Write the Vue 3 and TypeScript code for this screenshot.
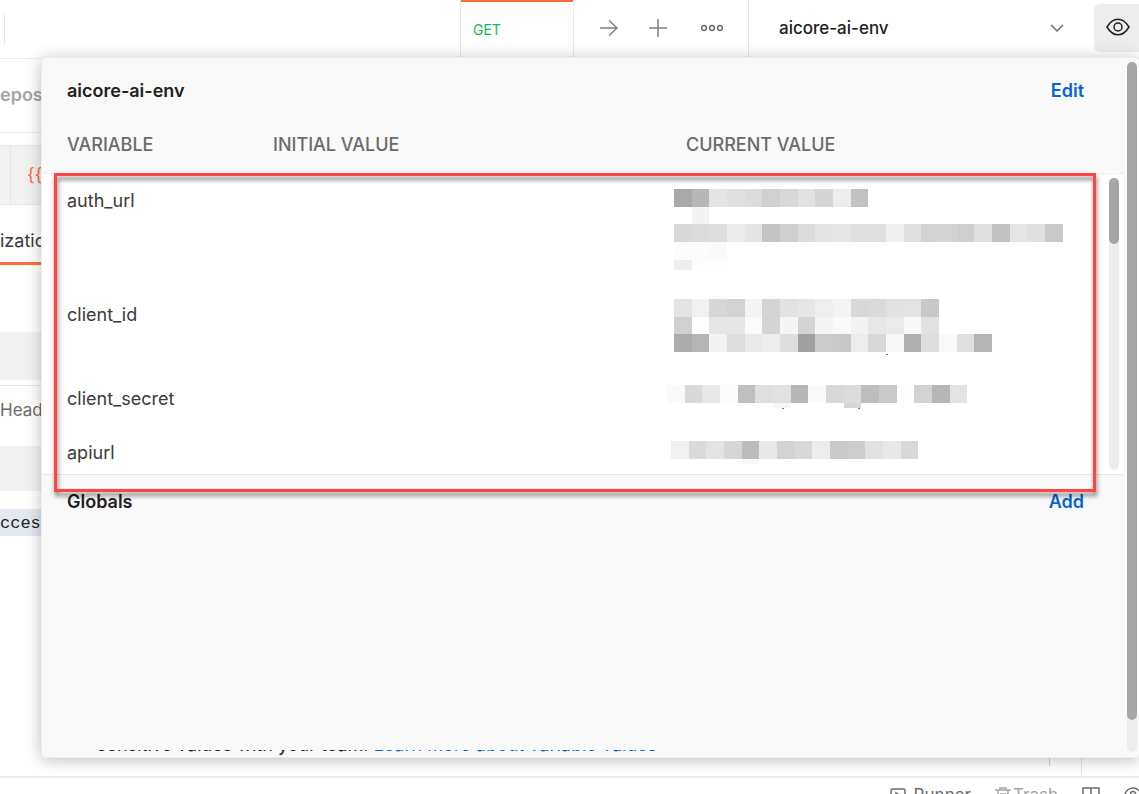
<script setup lang="ts">
import { ref } from 'vue'

interface Block {
  x: number
  y: number
  w: number
  h: number
  fill: string
}

interface Variable {
  name: string
  lines: number
  blocks: Block[]
}

const STEP = 53 / 3

/* Lays out one row of mosaic cells, each described by a grey level in hex. */
function strip(left: number, y: number, h: number, greys: string, skip = 0): Block[] {
  return greys.split(' ').map((grey, i) => {
    const start = Math.round((i + skip) * STEP)
    const end = Math.round((i + skip + 1) * STEP)
    return { x: left + start, y, w: end - start, h, fill: '#' + grey + grey + grey }
  })
}

const variables: Variable[] = [
  {
    name: 'auth_url',
    lines: 3,
    blocks: [
      ...strip(7, 15, 18, 'a9 b7 e4 e0 dc d0 d8 e2 d5 ed c2'),
      ...strip(7, 33, 17, 'f3', 1),
      ...strip(7, 50, 18, 'd8 dc de ea e4 c4 cf db e4 e6 e0 e0 ef e0 d2 d3 cf e0 c2 e5 e0 c9'),
      ...strip(7, 68, 18, 'fc fc fa'),
      ...strip(7, 86, 10, 'ee fd fd'),
    ],
  },
  {
    name: 'client_id',
    lines: 2,
    blocks: [
      ...strip(7, 11, 18, 'e4 f1 d6 d2 f4 d4 e2 e6 ee f4 d8 da e2 e3 c8'),
      ...strip(7, 29, 17, 'd0 fd e5 e6 fb d4 f5 d3 f5 fa f3 e7 ea f8 e1'),
      ...strip(7, 46, 18, 'ac b5 f3 dd e9 ed de a0 cb c8 ec d8 f8 af de f9 e0 b5'),
      { x: 219, y: 66, w: 2, h: 1, fill: '#777' },
    ],
  },
  {
    name: 'client_secret',
    lines: 1,
    blocks: [
      ...strip(0, 13, 18, 'fa d9 e7 fc bf df e1 b6 fa d8 dc bd ca fe d3 b6 e3'),
      ...strip(0, 31, 5, 'f6', 6),
      ...strip(0, 31, 5, 'd5', 10),
      { x: 115, y: 36, w: 2, h: 1, fill: '#777' },
      { x: 191, y: 36, w: 2, h: 1, fill: '#777' },
    ],
  },
  {
    name: 'apiurl',
    lines: 1,
    blocks: [
      ...strip(4, 15, 18, 'f0 da e3 d6 bc e8 d3 d8 ed ca cd e1 e8 d9'),
      ...strip(4, 33, 5, 'f8', 4),
    ],
  },
]

const environment = ref('aicore-ai-env')
</script>

<template>
  <div class="app">
    <header class="topbar">
      <div class="lead"><span class="divider"></span></div>
      <a class="tab" href="#">GET</a>
      <div class="actions">
        <button type="button" aria-label="Next tab">
          <svg width="20" height="20" viewBox="0 0 20 20"><path d="M1 10h17M10 2.5l8 7.5-8 7.5" /></svg>
        </button>
        <button type="button" aria-label="New tab">
          <svg width="20" height="20" viewBox="0 0 20 20"><path d="M10 1v18M1 10h18" /></svg>
        </button>
        <button type="button" aria-label="More options">
          <svg class="dots" width="22" height="8" viewBox="0 0 22 8">
            <circle cx="3" cy="4" r="2.4" /><circle cx="11" cy="4" r="2.4" /><circle cx="19" cy="4" r="2.4" />
          </svg>
        </button>
      </div>
      <div class="env">
        <select v-model="environment" aria-label="Environment">
          <option>aicore-ai-env</option>
        </select>
        <svg width="14" height="10" viewBox="0 0 14 10"><path d="M1 2l6 6 6-6" /></svg>
      </div>
      <button class="eye" type="button" aria-label="Environment quick look">
        <svg width="24" height="18" viewBox="0 0 24 18">
          <path d="M1 9C4 4 7.500 1.200 12 1.200S20 4 23 9c-3 5-6.500 7.800-11 7.800S4 14 1 9z" />
          <circle cx="12" cy="9" r="4" />
        </svg>
      </button>
    </header>

    <main class="request">
      <div class="crumb">epos</div>
      <div class="url"><span class="method"></span><span class="braces" v-text="'{{'"></span></div>
      <div class="subtab">ization</div>
      <div class="band"></div>
      <div class="headers">Head</div>
      <div class="band low"></div>
      <div class="code">cces</div>
      <div class="rail"><i></i></div>
    </main>

    <footer class="status">
      <a href="#" class="runner">
        <svg width="16" height="16" viewBox="0 0 16 16"><rect x="1" y="1" width="14" height="14" rx="1.500" /><path d="M6 5l5 3-5 3z" /></svg>
        Runner
      </a>
      <a href="#" class="trash">
        <svg width="16" height="18" viewBox="0 0 16 18"><path d="M0 3h16M5 3V1h6v2M3 3v14h10V3M6 6v9M8 6v9M10 6v9" /></svg>
        Trash
      </a>
      <button type="button" aria-label="Two pane view">
        <svg width="18" height="18" viewBox="0 0 18 18"><path d="M1 1h16v16H1zM9 1v16M1 11h16" /></svg>
      </button>
      <button type="button" aria-label="Help">
        <svg width="18" height="18" viewBox="0 0 18 18"><circle cx="9" cy="9" r="8" /><path d="M6.500 7a2.500 2.500 0 1 1 3.500 2.300c-.8.300-1 .8-1 1.700M9 12.500v1.500" /></svg>
      </button>
    </footer>

    <section class="panel">
      <div class="content">
        <div class="heading">
          <h2>{{ environment }}</h2>
          <a href="#">Edit</a>
        </div>
        <div class="values">
          <table>
            <thead>
              <tr><th>VARIABLE</th><th>INITIAL VALUE</th><th class="current">CURRENT VALUE</th></tr>
            </thead>
            <tbody>
              <tr v-for="v in variables" :key="v.name" :class="'lines-' + v.lines">
                <td class="name">{{ v.name }}</td>
                <td></td>
                <td>
                  <svg class="mosaic" width="400" height="54" shape-rendering="crispEdges" aria-hidden="true">
                    <rect v-for="(b, i) in v.blocks" :key="i" :x="b.x" :y="b.y" :width="b.w" :height="b.h" :fill="b.fill" />
                  </svg>
                </td>
              </tr>
            </tbody>
          </table>
          <div class="track inner"><div class="thumb"></div></div>
          <div class="highlight"></div>
        </div>
        <div class="heading globals">
          <h2>Globals</h2>
          <a href="#">Add</a>
        </div>
        <p class="note"><span>sensitive values with your team. <a href="#">Learn more about variable values</a></span></p>
      </div>
      <div class="gutter"><div class="track"><div class="thumb"></div></div></div>
    </section>
  </div>
</template>

<style>
body {
  margin: 0;
  background: #fff;
}
</style>

<style scoped>
.app {
  position: relative;
  display: flex;
  flex-direction: column;
  height: 100vh;
  overflow: hidden;
  box-sizing: border-box;
  font-family: Inter, "Liberation Sans", sans-serif;
  font-size: 18px;
  color: #212121;
}
.app * {
  box-sizing: border-box;
}
a {
  color: #0265d2;
  text-decoration: none;
}
button {
  display: flex;
  align-items: center;
  justify-content: center;
  padding: 0;
  border: 0;
  background: none;
}
svg {
  display: block;
  fill: none;
  stroke: #6b6b6b;
  stroke-width: 1.5;
}
.topbar {
  display: flex;
  flex: none;
  height: 59px;
  border-bottom: 1px solid #ededed;
}
.lead {
  flex: 1;
  padding: 13px 4px;
}
.divider {
  display: block;
  width: 1px;
  height: 31px;
  background: #e6e6e6;
}
.tab {
  width: 114px;
  padding-left: 12px;
  border: solid #e6e6e6;
  border-width: 0 1px;
  box-shadow: inset 0 2px #ff6c37;
  font-size: 14px;
  line-height: 60px;
  color: #0cbb52;
}
.actions {
  display: flex;
  align-items: center;
  gap: 27px;
  width: 175px;
  padding-left: 24px;
  padding-bottom: 3px;
  border-right: 1px solid #e6e6e6;
}
.actions button {
  width: 22px;
}
.actions svg {
  stroke: #808080;
}
.actions .dots {
  stroke: #6b6b6b;
}
.actions button:nth-child(2) {
  margin-right: 5px;
}
.env {
  display: flex;
  align-items: center;
  width: 345px;
  padding: 0 30px 3px;
}
.env select {
  flex: 1;
  height: 32px;
  padding: 0;
  border: 0;
  background: none;
  appearance: none;
  font: 500 17px Inter, sans-serif;
  color: #212121;
}
.eye {
  width: 45px;
  height: 48px;
  margin-top: 4px;
  padding: 0 0 2px 3px;
  border-radius: 6px 0 0 6px;
  background: #ededed;
}
.eye svg {
  stroke: #212121;
}
.request {
  display: flex;
  flex: 1;
  flex-direction: column;
  min-height: 0;
}
.crumb {
  flex: none;
  height: 74px;
  border-bottom: 1px solid #ededed;
  font-weight: 600;
  line-height: 72px;
  color: #a6a6a6;
}
.url {
  display: flex;
  flex: none;
  height: 60px;
  margin-top: 12px;
  border: solid #e6e6e6;
  border-width: 1px 0;
  background: #f2f2f2;
  line-height: 58px;
  color: #ff6c37;
}
.method {
  width: 11px;
  margin-right: 16px;
  border-right: 1px solid #e6e6e6;
}
.subtab {
  flex: none;
  height: 60px;
  border-bottom: 3px solid #ff6c37;
  line-height: 72px;
  color: #3a3a3a;
}
.band {
  flex: none;
  height: 48px;
  margin-top: 67px;
  background: #f2f2f2;
}
.headers {
  flex: none;
  height: 61px;
  margin-top: 5px;
  border-top: 1px solid #e6e6e6;
  font-size: 17px;
  line-height: 48px;
  color: #6b6b6b;
}
.band.low {
  height: 45px;
  margin-top: 0;
}
.code {
  flex: none;
  height: 27px;
  margin-top: 18px;
  background: #e3e8f1;
  font: 17px/30px "Liberation Mono", monospace;
}
.rail {
  display: flex;
  flex: 1;
  align-items: flex-end;
  width: 33px;
  margin-left: auto;
  margin-right: 57px;
  border-right: 1px solid #e6e6e6;
}
.rail i {
  width: 1px;
  height: 100%;
  margin-bottom: 10px;
  background: #ccc;
}
.status {
  display: flex;
  flex: none;
  align-items: flex-start;
  justify-content: flex-end;
  gap: 24px;
  height: 18px;
  padding-top: 9px;
  border-top: 2px solid #ededed;
  background: #fff;
  font-size: 17px;
  line-height: 16px;
}
.status a {
  display: flex;
  gap: 8px;
  color: #6b6b6b;
}
.runner svg {
  margin-top: 1px;
}
.status .trash {
  gap: 2px;
  color: #a6a6a6;
}
.trash svg {
  stroke: #a6a6a6;
}
.status button:last-child {
  margin-right: -3px;
}
.panel {
  position: absolute;
  inset: 57px 0 36px 41px;
  display: flex;
  border: 1px solid #ededed;
  border-right: 0;
  border-radius: 5px;
  background: #f9f9f9;
  box-shadow: 0 2px 16px rgba(0, 0, 0, 0.26);
}
.content {
  display: flex;
  flex: 1;
  flex-direction: column;
  min-width: 0;
}
.heading {
  display: flex;
  justify-content: space-between;
  padding: 18px 39px 0 25px;
  line-height: 30px;
}
.heading h2 {
  margin: 0;
  font-size: 18px;
  font-weight: 600;
}
.heading a {
  font-weight: 600;
}
.values {
  position: relative;
  margin-top: 10px;
}
table,
thead,
tbody {
  display: block;
}
tbody {
  height: 301px;
  overflow: hidden;
  border-bottom: 1px solid #e6e6e6;
  background: #fff;
}
tr {
  display: grid;
  grid-template-columns: 206fr 419fr 456fr;
}
thead tr {
  height: 58px;
  border-bottom: 1px solid #ededed;
}
th,
td {
  padding: 0;
  text-align: left;
}
th {
  padding-left: 25px;
  font-weight: 600;
  line-height: 58px;
  color: #6b6b6b;
}
th {
  font-weight: 500;
}
.current {
  padding-left: 19px;
}
.name {
  padding: 12px 0 0 25px;
  line-height: 30px;
  color: #3a3a3a;
}
.lines-3 {
  height: 114px;
}
.lines-2 {
  height: 84px;
}
.lines-1 {
  height: 54px;
}
.mosaic {
  overflow: visible;
  stroke: none;
}
.track {
  width: 10px;
  border-radius: 5px;
  background: #ededed;
}
.thumb {
  height: calc(100% - 32px);
  border-radius: 5px;
  background: #a6a6a6;
}
.gutter {
  display: flex;
  width: 16px;
  padding: 4px 2px 5px 4px;
}
.inner {
  position: absolute;
  top: 62px;
  right: 4px;
  bottom: 5px;
}
.inner .thumb {
  height: 66px;
}
.highlight {
  position: absolute;
  inset: 57px 27px -17px 12px;
  border: 3px solid #f44;
  filter: drop-shadow(1px 4px 2px rgba(0, 0, 0, 0.5));
}
.globals {
  padding-top: 12px;
}
.note {
  display: flex;
  align-items: flex-end;
  height: 7px;
  margin: auto 0 0;
  padding-left: 55px;
  overflow: hidden;
  line-height: 24px;
}
</style>
